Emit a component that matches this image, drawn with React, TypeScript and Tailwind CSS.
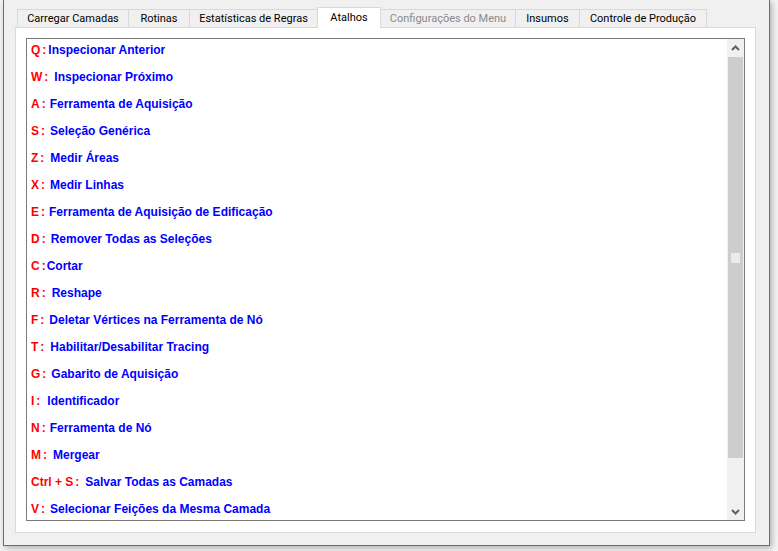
import React from "react";

const tabs = [
  { label: "Carregar Camadas", w: "w-[112px]" },
  { label: "Rotinas", w: "w-[62px]" },
  { label: "Estatísticas de Regras", w: "w-[129px]" },
  { label: "Atalhos", w: "w-[64px]", active: true },
  { label: "Configurações do Menu", w: "w-[136px]", disabled: true },
  { label: "Insumos", w: "w-[65px]" },
  { label: "Controle de Produção", w: "w-[128px]" },
];

// gap = distance in px between the red colon and the blue description
const shortcuts = [
  { k: "Q", t: "Inspecionar Anterior", gap: 2 },
  { k: "W", t: "Inspecionar Próximo", gap: 6 },
  { k: "A", t: "Ferramenta de Aquisição", gap: 4 },
  { k: "S", t: "Seleção Genérica", gap: 5 },
  { k: "Z", t: "Medir Áreas", gap: 6 },
  { k: "X", t: "Medir Linhas", gap: 5 },
  { k: "E", t: "Ferramenta de Aquisição de Edificação", gap: 4 },
  { k: "D", t: "Remover Todas as Seleções", gap: 5 },
  { k: "C", t: "Cortar", gap: 1 },
  { k: "R", t: "Reshape", gap: 6 },
  { k: "F", t: "Deletar Vértices na Ferramenta de Nó", gap: 5 },
  { k: "T", t: "Habilitar/Desabilitar Tracing", gap: 6 },
  { k: "G", t: "Gabarito de Aquisição", gap: 5 },
  { k: "I", t: "Identificador", gap: 7 },
  { k: "N", t: "Ferramenta de Nó", gap: 4 },
  { k: "M", t: "Mergear", gap: 6 },
  { k: "Ctrl + S", t: "Salvar Todas as Camadas", gap: 6 },
  { k: "V", t: "Selecionar Feições da Mesma Camada", gap: 5 },
];

function Chevron({ up }: { up?: boolean }) {
  return (
    <svg width="9" height="6" viewBox="0 0 9 6">
      <polyline
        points={up ? "1,5 4.5,1.5 8,5" : "1,1 4.5,4.5 8,1"}
        fill="none"
        stroke="#606060"
        strokeWidth="2"
      />
    </svg>
  );
}

export default function App() {
  return (
    <div className="w-[778px] h-[551px] overflow-hidden bg-[#f3f3f3]">
      <div className="ml-[3px] w-[767px] h-[546px] bg-[#f0f0f0] border-x border-b border-[#1883d7] shadow-[2px_2px_6px_rgba(0,0,0,0.28)] pt-[7px] pl-[11px]">
        <div className="flex items-end h-[20px] pl-[2px] text-[11px] font-['Roboto',sans-serif]">
          {tabs.map((tab, i) =>
            tab.active ? (
              <div
                key={tab.label}
                className={`${tab.w} ${i ? "-ml-px" : ""} relative z-10 h-[21px] -mb-px bg-white border-x border-t border-[#d9d9d9] flex items-center justify-center text-black`}
              >
                {tab.label}
              </div>
            ) : (
              <div
                key={tab.label}
                className={`${tab.w} ${i ? "-ml-px" : ""} h-[18px] pt-[2px] bg-[#f0f0f0] border-x border-t border-[#d9d9d9] flex items-center justify-center ${tab.disabled ? "text-[#8a8a8a]" : "text-black"}`}
              >
                {tab.label}
              </div>
            )
          )}
        </div>
        <div className="w-[741px] h-[506px] border border-[#d9d9d9] bg-white pt-[10px] pl-[10px] pr-[10px] pb-[11px]">
          <div className="w-[719px] h-[483px] border border-[#7a7a7a] bg-white flex">
            <div className="flex-1 pt-[4px] pl-[4px] font-['Liberation_Sans',Arial,sans-serif] font-bold text-[12px]">
              {shortcuts.map((s) => (
                <div key={s.k} className="h-[27px] leading-[14px] flex whitespace-pre">
                  <span className="text-[#ff0000]">{s.k}</span>
                  <span className="text-[#ff0000] ml-[2px]">:</span>
                  <span className="text-[#0000ff]" style={{ marginLeft: s.gap }}>
                    {s.t}
                  </span>
                </div>
              ))}
            </div>
            <div className="w-[17px] bg-[#f0f0f0] flex flex-col">
              <div className="h-[17px] flex items-center justify-center">
                <Chevron up />
              </div>
              <div className="flex-1 pt-[1px]">
                <div className="mx-[1px] h-[401px] bg-[#cdcdcd] flex items-center justify-center">
                  <div className="w-[9px] h-[10px] bg-[#ebebeb]" />
                </div>
              </div>
              <div className="h-[17px] flex items-center justify-center">
                <Chevron />
              </div>
            </div>
          </div>
        </div>
      </div>
    </div>
  );
}
